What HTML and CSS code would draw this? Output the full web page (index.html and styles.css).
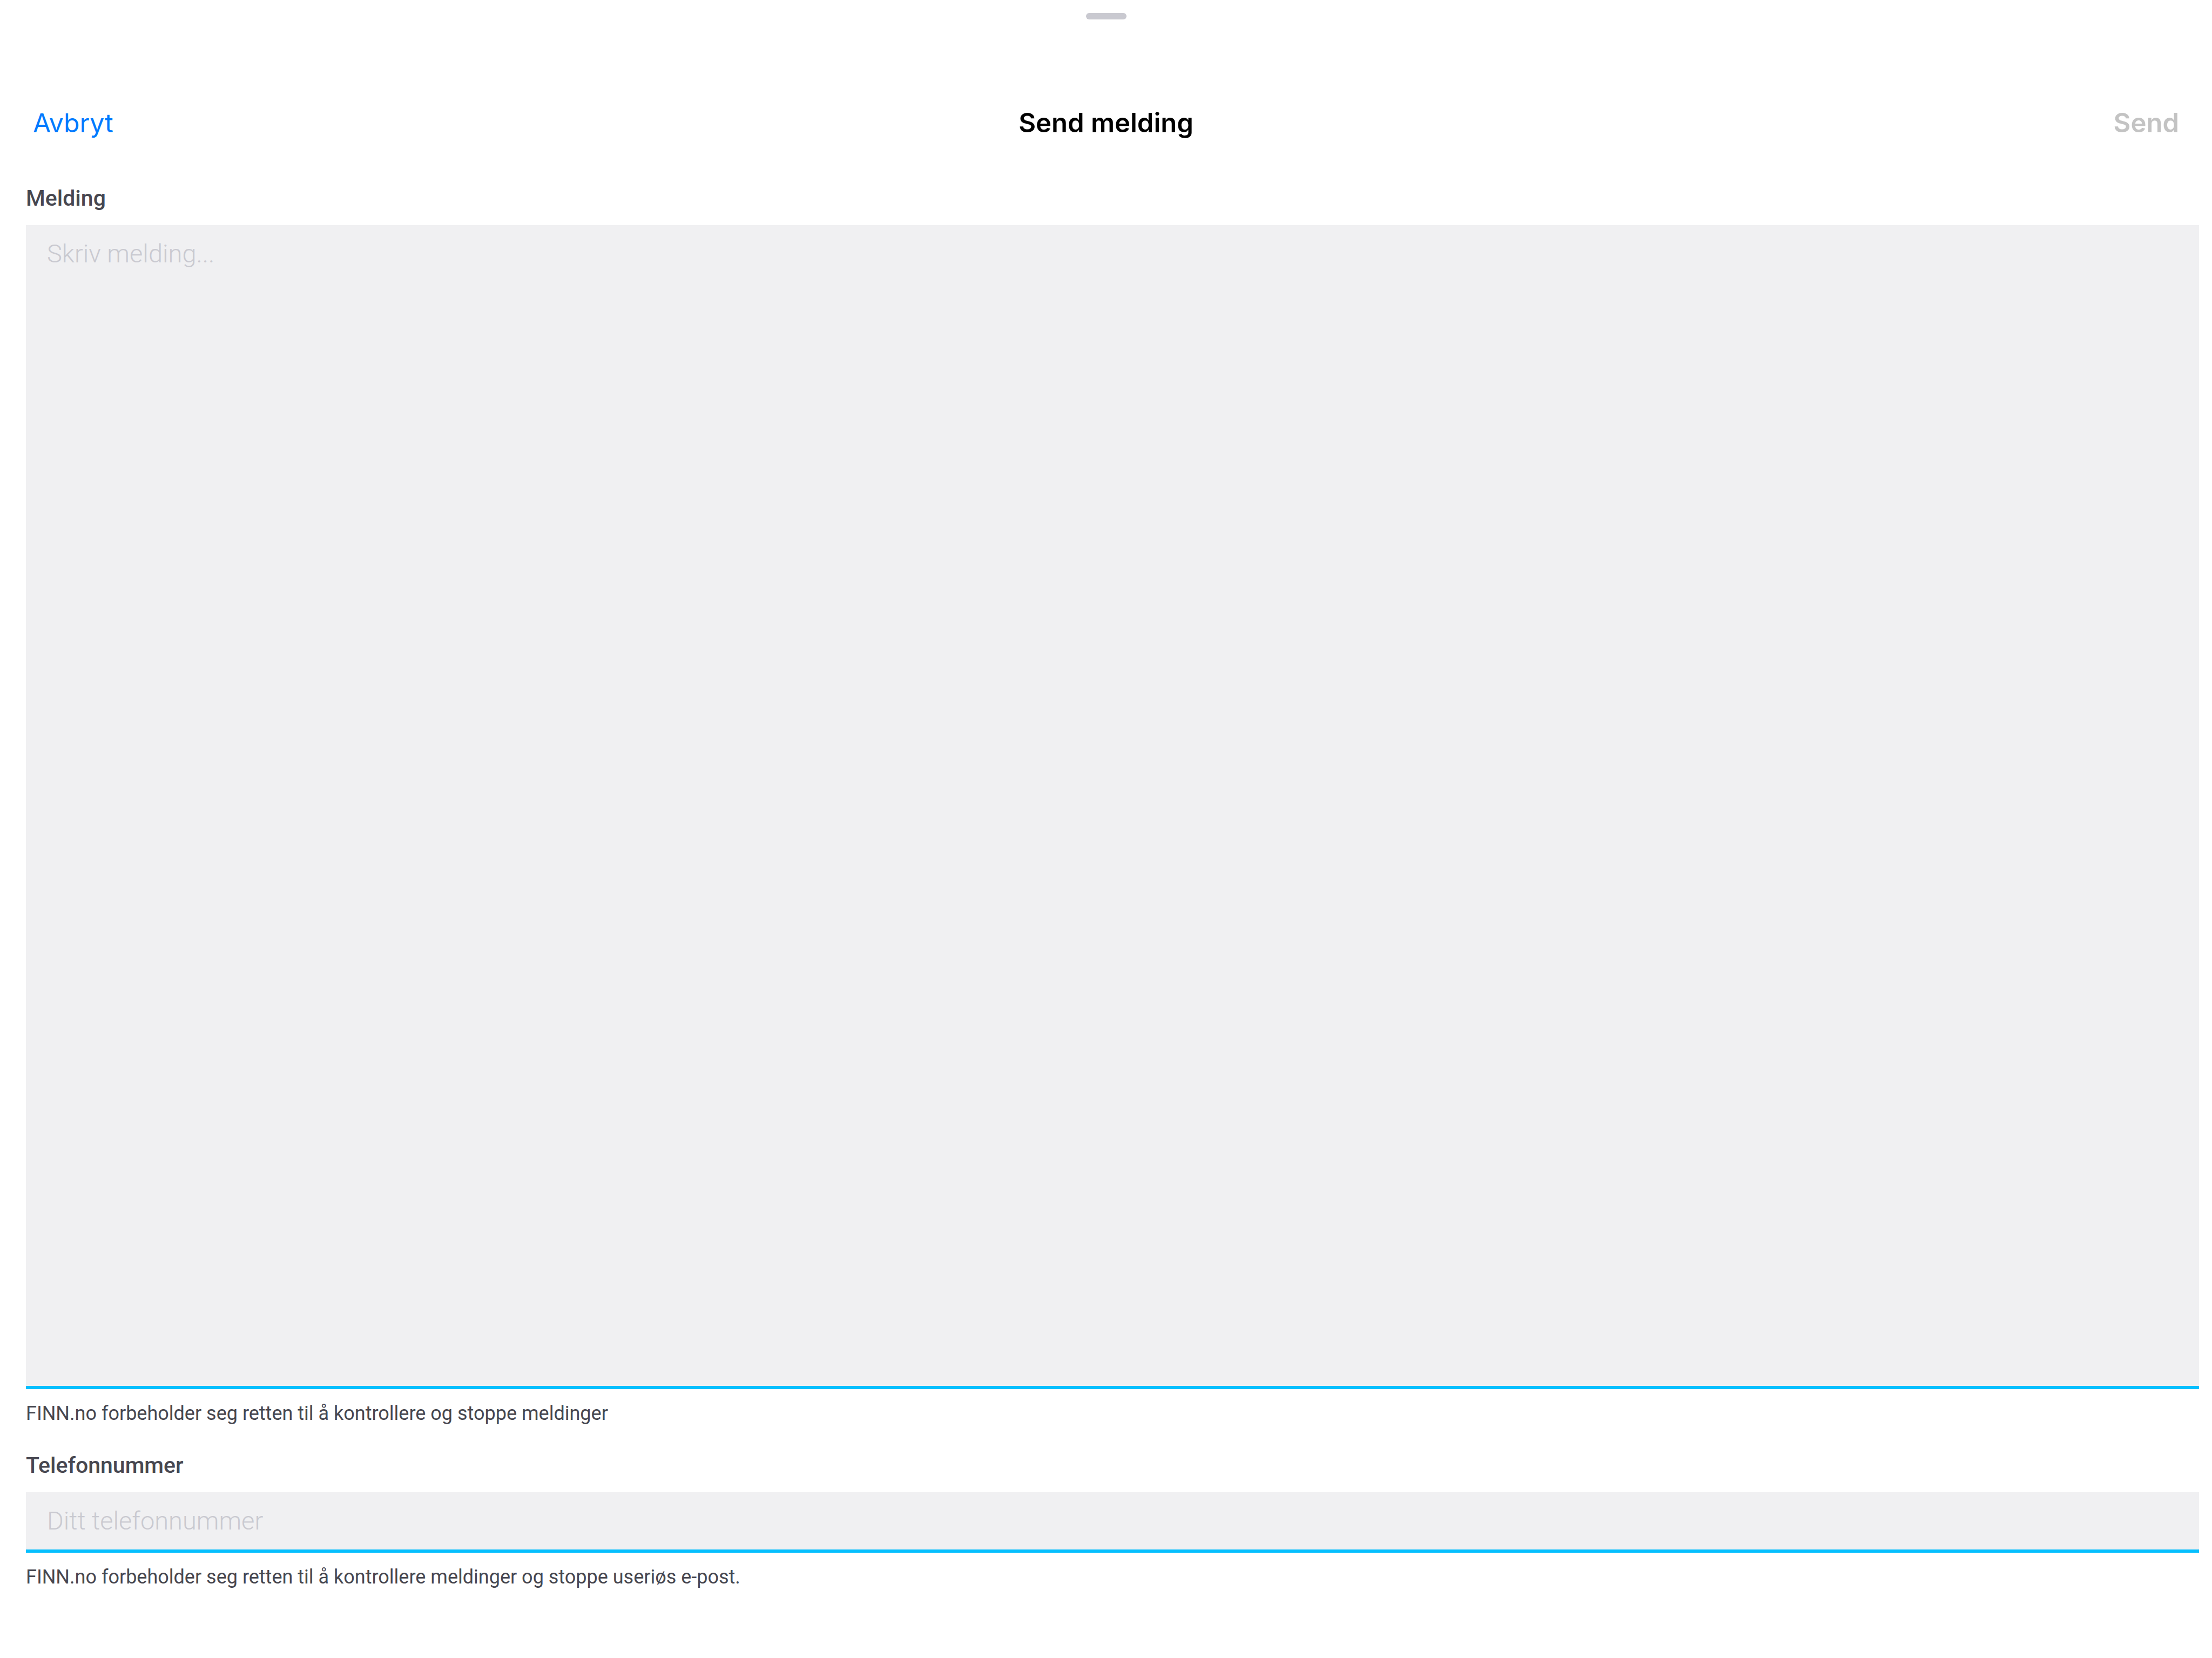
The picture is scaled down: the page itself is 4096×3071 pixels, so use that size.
FILE: index.html
```html
<!DOCTYPE html>
<html lang="no">
<head>
<meta charset="utf-8">
<meta name="viewport" content="width=device-width, initial-scale=1">
<title>Send melding</title>
<link rel="stylesheet" href="styles.css">
</head>
<body>
<form class="sheet">
  <div class="handle"></div>
  <header class="navbar">
    <button class="nav-button cancel" type="button">Avbryt</button>
    <h1 class="title">Send melding</h1>
    <button class="nav-button send" type="submit" disabled>Send</button>
  </header>
  <main class="fields">
    <section class="field grow">
      <label class="label" for="message">Melding</label>
      <textarea class="input" id="message" placeholder="Skriv melding..." aria-describedby="message-help"></textarea>
      <p class="help" id="message-help">FINN.no forbeholder seg retten til å kontrollere og stoppe meldinger</p>
    </section>
    <section class="field">
      <label class="label" for="phone">Telefonnummer</label>
      <input class="input" id="phone" type="tel" placeholder="Ditt telefonnummer" aria-describedby="phone-help">
      <p class="help" id="phone-help">FINN.no forbeholder seg retten til å kontrollere meldinger og stoppe useriøs e-post.</p>
    </section>
  </main>
</form>
</body>
</html>
```
FILE: styles.css
```css
* {
  box-sizing: border-box;
}

body {
  margin: 0;
  background: #fff;
  color: #474750;
  font-family: Roboto, "Liberation Sans", sans-serif;
}

.sheet {
  display: flex;
  flex-direction: column;
  min-height: 100vh;
  padding-top: 24px;
}

.handle {
  align-self: center;
  width: 75px;
  height: 12px;
  border-radius: 6px;
  background: #c9c9d0;
}

.navbar {
  display: grid;
  grid-template-columns: 1fr auto 1fr;
  align-items: center;
  padding: 162px 61px 0;
  font-family: Inter, "Liberation Sans", sans-serif;
  font-size: 49px;
  line-height: 60px;
}

.title,
.nav-button {
  margin: 0;
  font: inherit;
  font-weight: 600;
}

.title {
  color: #000;
}

.nav-button {
  padding: 0;
  border: 0;
  background: none;
}

.cancel {
  justify-self: start;
  color: #007aff;
  font-size: 48px;
  font-weight: 400;
}

.send {
  justify-self: end;
  color: #c3c3c3;
}

.fields {
  display: flex;
  flex: 1;
  flex-direction: column;
  gap: 45px;
  padding: 82px 24px 126px 48px;
}

.field {
  display: flex;
  flex-direction: column;
}

.grow {
  flex: 1;
}

.label {
  margin-bottom: 23px;
  font-size: 41px;
  font-weight: 500;
  line-height: 54px;
}

.input {
  width: 100%;
  padding: 23px 39px;
  border: 0;
  border-bottom: 6px solid #06bffe;
  border-radius: 0;
  outline: 0;
  background: #f0f0f2;
  color: #474750;
  font: 300 47px/60px Roboto, "Liberation Sans", sans-serif;
  resize: none;
}

.grow .input {
  flex: 1;
}

.input::placeholder {
  color: #c9c9d0;
  opacity: 1;
}

.help {
  margin: 21px 0 0;
  font-size: 36px;
  line-height: 48px;
}
```
